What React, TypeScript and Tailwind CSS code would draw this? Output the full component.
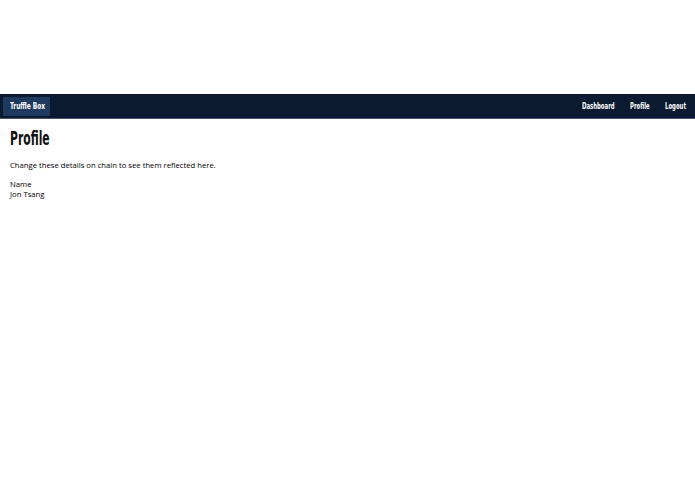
import React from "react";

const condensed = "font-['DejaVu_Sans_Condensed','DejaVu_Sans',sans-serif]";

const NavLink = ({ label, width }: { label: string; width: string }) => (
  <a className={`flex h-full items-center whitespace-nowrap ${width}`}>
    <span className={`block origin-left scale-x-[0.66] text-[9px] leading-[9px] font-bold text-white ${condensed}`}>
      {label}
    </span>
  </a>
);

export default function App() {
  return (
    <div className="min-h-screen bg-white font-['Open_Sans',sans-serif] text-[#111]">
      <div className="h-[94px]" />
      {/* Navbar */}
      <nav className="flex h-[25px] items-center justify-between border-b border-[#4a5568] bg-[#0b1a31] pl-[3px] pr-[10px]">
        <a className="flex h-[19px] w-[47px] items-center overflow-hidden bg-[#1f3a5e] pl-[7px] pt-[1px]">
          <span className={`block origin-left scale-x-[0.72] whitespace-nowrap text-[9px] leading-[9px] font-bold text-white ${condensed}`}>
            Truffle Box
          </span>
        </a>
        <div className="flex h-full items-center gap-[16px]">
          <NavLink label="Dashboard" width="w-[32px]" />
          <NavLink label="Profile" width="w-[19px]" />
          <NavLink label="Logout" width="w-[20px]" />
        </div>
      </nav>

      {/* Content */}
      <main className="px-[10px] pt-[6px]">
        <h1 className={`origin-left scale-x-[0.6] text-[20px] leading-[26px] font-bold ${condensed}`}>Profile</h1>
        <p className="mt-[9px] text-[7.7px] leading-[10.5px] text-black">Change these details on chain to see them reflected here.</p>
        <div className="mt-[8px] text-[7.7px] leading-[10.5px] text-black">
          <p>Name</p>
          <p>Jon Tsang</p>
        </div>
      </main>
    </div>
  );
}
